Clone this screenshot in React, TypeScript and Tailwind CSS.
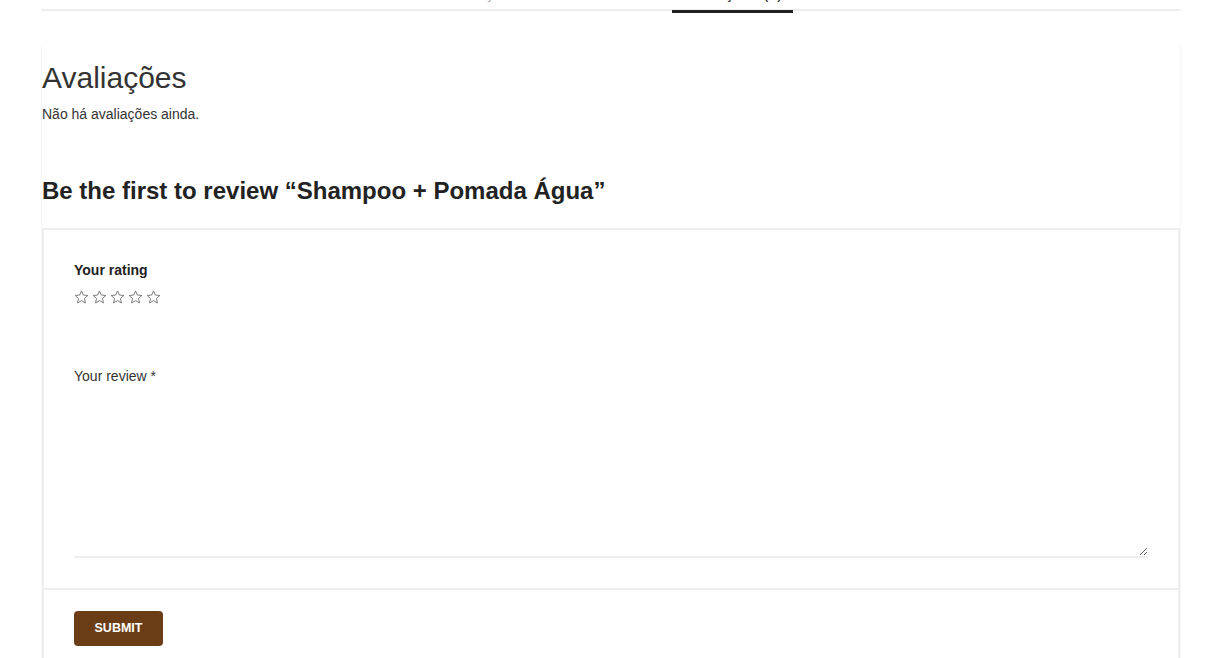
import { useState } from "react";

const tabs = [
  { label: "Descrição", active: false },
  { label: "Avaliações (0)", active: true },
];

function StarOutline() {
  return (
    <svg width="15" height="14" viewBox="0 0 24 23" fill="none">
      <polygon
        points="12,1.5 15.1,8.3 22.5,9 16.9,14 18.5,21.3 12,17.5 5.5,21.3 7.1,14 1.5,9 8.9,8.3"
        stroke="#777"
        strokeWidth="1.6"
        strokeLinejoin="miter"
      />
    </svg>
  );
}

export default function App() {
  const [review, setReview] = useState("");

  return (
    <div className="h-[658px] w-full overflow-hidden bg-white font-['Liberation_Sans',Arial,sans-serif] text-[#333]">
      <div className="mx-[41px]">
        {/* Tabs (scrolled partly out of view) */}
        <div className="flex justify-center gap-[151px] border-b-2 border-[#eee] -mt-[16px]">
          {tabs.map((tab) => (
            <div
              key={tab.label}
              className={
                tab.active
                  ? "relative px-[10px] pb-[5px] text-[16px] leading-[20px] text-[#222]"
                  : "relative px-[10px] pb-[5px] text-[16px] leading-[20px] text-[#aaa]"
              }
            >
              {tab.label}
              {tab.active && (
                <span className="absolute left-0 right-0 top-full mt-[1px] h-[3px] bg-[#222]" />
              )}
            </div>
          ))}
        </div>

        {/* Reviews panel */}
        <div className="mt-[32px] border-x border-[#f7f7f7] pt-[17px]">
          <h2 className="text-[30px] leading-[36px] font-normal text-[#333]">Avaliações</h2>
          <p className="mt-[8px] text-[14px] leading-[20px] text-[#333]">Não há avaliações ainda.</p>

          <h3 className="mt-[52px] text-[24px] leading-[30px] font-bold text-[#222]">
            Be the first to review “Shampoo + Pomada Água”
          </h3>

          <form
            className="mt-[22px] border-2 border-b-0 border-[#eee]"
            onSubmit={(e) => e.preventDefault()}
          >
            <div className="px-[30px] pt-[30px] pb-[30px]">
              <label className="block text-[14px] leading-[20px] font-bold text-[#222]">Your rating</label>
              <div className="mt-[10px] flex gap-[3px]">
                {[1, 2, 3, 4, 5].map((n) => (
                  <StarOutline key={n} />
                ))}
              </div>

              <label className="mt-[62px] block text-[14px] leading-[20px] text-[#333]">
                Your review *
              </label>
              <textarea
                value={review}
                onChange={(e) => setReview(e.target.value)}
                className="mt-[6px] block h-[166px] w-full resize-y border-0 border-b-2 border-[#eee] bg-white p-2 text-[14px] outline-none"
              />
            </div>

            <div className="border-t-2 border-[#eee] px-[30px] pt-[21px] pb-[20px]">
              <button
                type="submit"
                className="h-[35px] w-[89px] rounded-[4px] bg-[#6b3d17] text-[12.5px] font-bold text-white"
              >
                SUBMIT
              </button>
            </div>
          </form>
        </div>
      </div>
    </div>
  );
}
